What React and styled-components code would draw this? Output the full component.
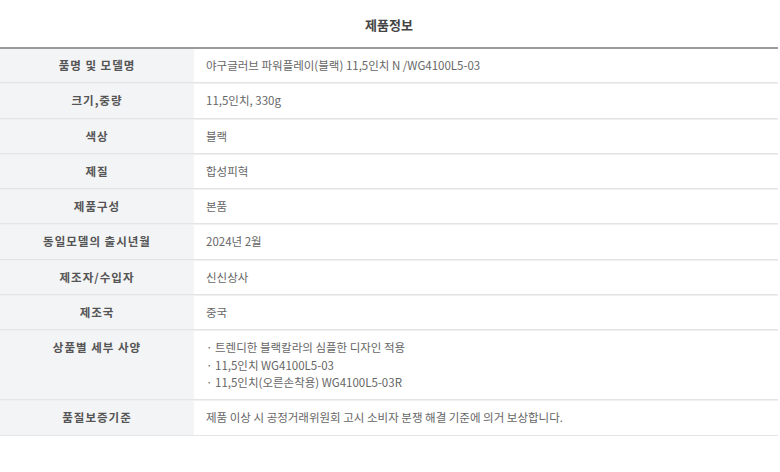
import React from "react";
import styled, { createGlobalStyle } from "styled-components";

const Global = createGlobalStyle`
  html, body { margin: 0; padding: 0; background: #fff; }
  body { font-family: "Noto Sans CJK KR", "Noto Sans", sans-serif; }
`;

const Wrap = styled.div`
  width: 778px;
`;

const Title = styled.h2`
  margin: 0;
  height: 47px;
  display: flex;
  align-items: center;
  justify-content: center;
  font-size: 13px;
  font-weight: 700;
  color: #444;
  padding-top: 2px;
  box-sizing: border-box;
`;

const Table = styled.div`
  border-top: 2px solid #9a9a9a;
`;

const Row = styled.div`
  display: grid;
  grid-template-columns: 194px 1fr;
  border-bottom: 1px solid #e4e4e4;
  & + & { border-top: 1px solid #f0f0f0; }
`;

const Label = styled.div`
  background: #f3f4f6;
  color: #555;
  font-size: 11.5px;
  font-weight: 700;
  text-align: center;
  padding: 8px 8px;
  line-height: 17.3px;
  letter-spacing: 1px;
`;

const Value = styled.div`
  color: #666;
  font-size: 11.5px;
  padding: 8px 12px;
  line-height: 17.3px;
  display: flex;
  flex-direction: column;
`;

const rows = [
  ["품명 및 모델명", ["야구글러브 파워플레이(블랙) 11,5인치 N /WG4100L5-03"]],
  ["크기,중량", ["11,5인치, 330g"]],
  ["색상", ["블랙"]],
  ["제질", ["합성피혁"]],
  ["제품구성", ["본품"]],
  ["동일모델의 출시년월", ["2024년 2월"]],
  ["제조자/수입자", ["신신상사"]],
  ["제조국", ["중국"]],
  [
    "상품별 세부 사양",
    [
      "· 트렌디한 블랙칼라의 심플한 디자인 적용",
      "· 11,5인치 WG4100L5-03",
      "· 11,5인치(오른손착용) WG4100L5-03R",
    ],
  ],
  ["품질보증기준", ["제품 이상 시 공정거래위원회 고시 소비자 분쟁 해결 기준에 의거 보상합니다."]],
];

export default function App() {
  return (
    <Wrap>
      <Global />
      <Title>제품정보</Title>
      <Table>
        {rows.map(([label, values]) => (
          <Row key={label}>
            <Label>{label}</Label>
            <Value>
              {values.map((v) => (
                <span key={v}>{v}</span>
              ))}
            </Value>
          </Row>
        ))}
      </Table>
    </Wrap>
  );
}
